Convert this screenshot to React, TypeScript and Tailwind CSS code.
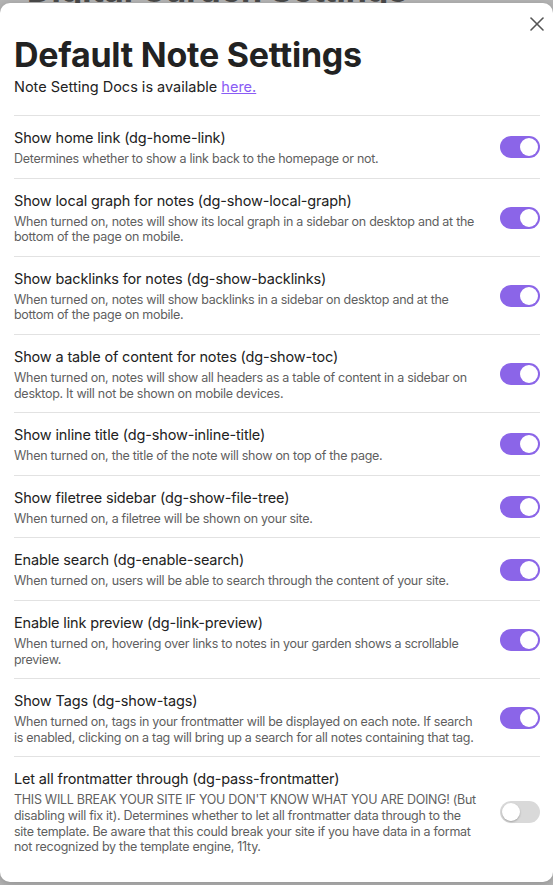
import { X } from "lucide-react";

type Setting = {
  name: string;
  desc: string;
  on: boolean;
  narrow?: boolean;
};

const settings: Setting[] = [
  {
    name: "Show home link (dg-home-link)",
    desc: "Determines whether to show a link back to the homepage or not.",
    on: true,
  },
  {
    name: "Show local graph for notes (dg-show-local-graph)",
    desc: "When turned on, notes will show its local graph in a sidebar on desktop and at the bottom of the page on mobile.",
    on: true,
  },
  {
    name: "Show backlinks for notes (dg-show-backlinks)",
    desc: "When turned on, notes will show backlinks in a sidebar on desktop and at the bottom of the page on mobile.",
    on: true,
  },
  {
    name: "Show a table of content for notes (dg-show-toc)",
    desc: "When turned on, notes will show all headers as a table of content in a sidebar on desktop. It will not be shown on mobile devices.",
    on: true,
  },
  {
    name: "Show inline title (dg-show-inline-title)",
    desc: "When turned on, the title of the note will show on top of the page.",
    on: true,
  },
  {
    name: "Show filetree sidebar (dg-show-file-tree)",
    desc: "When turned on, a filetree will be shown on your site.",
    on: true,
  },
  {
    name: "Enable search (dg-enable-search)",
    desc: "When turned on, users will be able to search through the content of your site.",
    on: true,
  },
  {
    name: "Enable link preview (dg-link-preview)",
    desc: "When turned on, hovering over links to notes in your garden shows a scrollable preview.",
    on: true,
  },
  {
    name: "Show Tags (dg-show-tags)",
    desc: "When turned on, tags in your frontmatter will be displayed on each note. If search is enabled, clicking on a tag will bring up a search for all notes containing that tag.",
    on: true,
  },
  {
    name: "Let all frontmatter through (dg-pass-frontmatter)",
    desc: "THIS WILL BREAK YOUR SITE IF YOU DON'T KNOW WHAT YOU ARE DOING! (But disabling will fix it). Determines whether to let all frontmatter data through to the site template. Be aware that this could break your site if you have data in a format not recognized by the template engine, 11ty.",
    on: false,
    narrow: true,
  },
];

function Toggle({ on }: { on: boolean }) {
  if (on) {
    return (
      <div className="w-[40px] h-[22px] rounded-full bg-[#8b65e8] flex items-center justify-end px-[2px] shrink-0">
        <div className="w-[18px] h-[18px] rounded-full bg-white" />
      </div>
    );
  }
  return (
    <div className="w-[40px] h-[22px] rounded-full bg-[#d9d9d9] flex items-center justify-start px-[2px] shrink-0">
      <div className="w-[18px] h-[18px] rounded-full bg-white shadow-[0_1px_2px_rgba(0,0,0,0.25)]" />
    </div>
  );
}

function SettingItem({ item }: { item: Setting }) {
  return (
    <div className="flex items-center border-t border-[#e2e2e2] pt-3 pb-[11px]">
      <div className="flex-1 min-w-0 mr-4">
        <div className="text-[14.5px] leading-[20px] tracking-[-0.15px] text-[#222222]">{item.name}</div>
        <div
          className={
            item.narrow
              ? "mt-[3px] max-w-[468px] text-[12.5px] leading-[15.6px] tracking-[-0.28px] text-[#5f5f5f]"
              : "mt-[3px] text-[12.5px] leading-[15.6px] tracking-[-0.28px] text-[#5f5f5f]"
          }
        >
          {item.desc}
        </div>
      </div>
      <Toggle on={item.on} />
    </div>
  );
}

export default function App() {
  return (
    <div className="w-[553px] h-[885px] bg-[#b4b4b4] overflow-hidden font-['Inter',sans-serif] flex flex-col">
      <div className="h-[3px] shrink-0 overflow-hidden pl-[27px]">
        <div className="-mt-[30px] text-[34px] leading-[40px] font-bold text-[#4a4a4a] whitespace-nowrap">
          Digital Garden Settings
        </div>
      </div>
      <div className="relative shrink-0 bg-white rounded-[10px] pl-[14px] pr-[13px] pt-[32px] pb-[16px] shadow-[0_2px_8px_rgba(0,0,0,0.2)]">
        <X className="absolute right-[4px] top-[9px] text-[#555555]" size={24} strokeWidth={1.6} />
        <h1 className="text-[34px] leading-[40px] font-bold text-[#222222] tracking-[-0.25px]">
          Default Note Settings
        </h1>
        <p className="mt-[2px] text-[14.5px] leading-[20px] text-[#222222]">
          Note Setting Docs is available{" "}
          <a className="text-[#8a5cf5] underline">here.</a>
        </p>
        <div className="mt-[18px]">
          {settings.map((s) => (
            <SettingItem key={s.name} item={s} />
          ))}
        </div>
      </div>
    </div>
  );
}
